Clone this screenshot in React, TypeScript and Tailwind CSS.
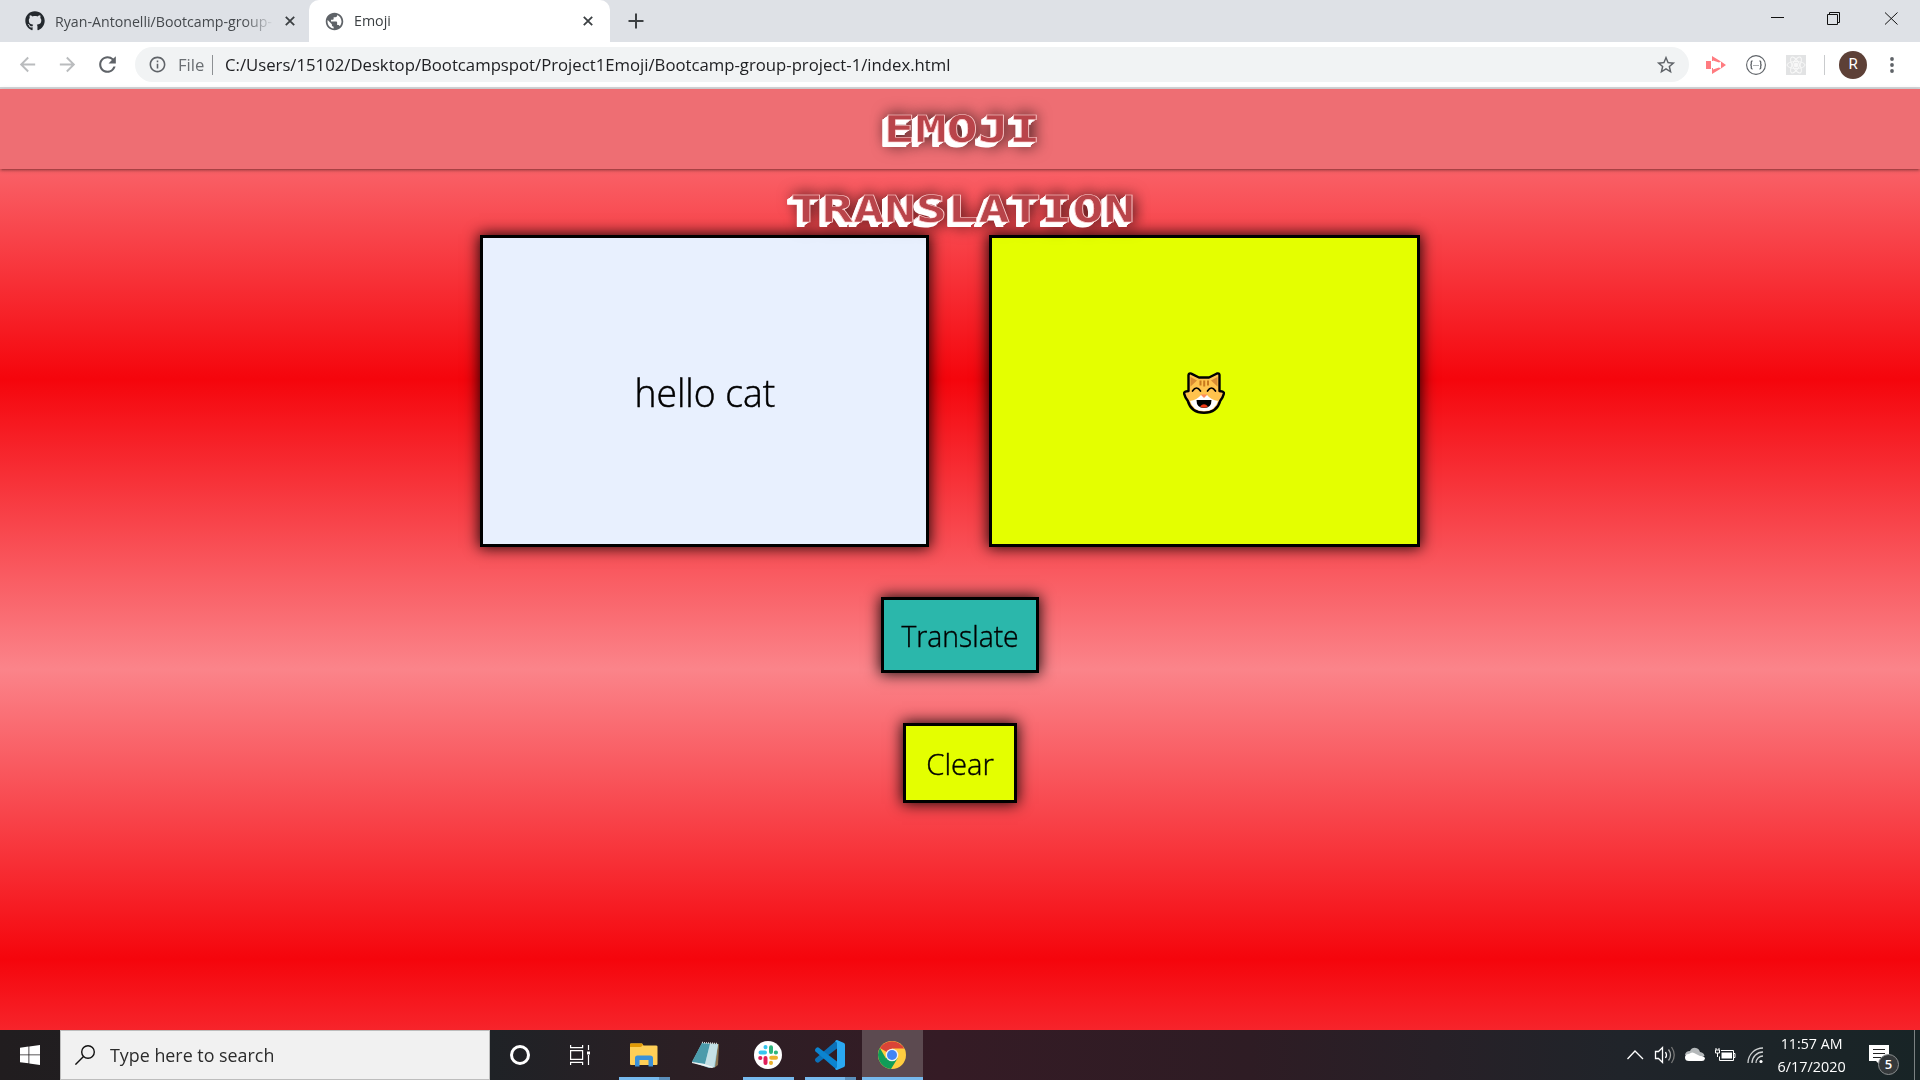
import React from "react";
import { FaGithub } from "react-icons/fa";
import { MdPublic, MdRefresh, MdInfoOutline, MdStarBorder, MdArrowBack, MdArrowForward } from "react-icons/md";

const ui = "font-['Open_Sans','Noto_Sans',sans-serif]";

function Cross({ className = "" }: { className?: string }) {
  return (
    <svg viewBox="0 0 10 10" className={"h-[10px] w-[10px] shrink-0 " + className} stroke="#3c4043" strokeWidth="1.8">
      <path d="M.8.8l8.4 8.4M9.2.8L.8 9.2" />
    </svg>
  );
}

function TabStrip() {
  return (
    <div className="flex h-[42px] w-full items-end bg-[#dee1e6]">
      <div className="flex h-[42px] w-[309px] items-center pl-[25px]">
        <FaGithub className="h-5 w-5 shrink-0 text-[#24292e]" />
        <div className="-mt-px ml-[10px] w-[219px] [mask-image:linear-gradient(to_right,black_86%,transparent)]">
          <span className="inline-block origin-left scale-x-[0.945] whitespace-nowrap text-[15px] text-[#45494d]">
            Ryan-Antonelli/Bootcamp-group-
          </span>
        </div>
        <Cross className="ml-[11px]" />
      </div>
      <div className="flex h-[42px] w-[301px] items-center rounded-t-[10px] bg-white pl-[15px]">
        <MdPublic className="h-[21px] w-[21px] shrink-0 text-[#5f6368]" />
        <span className="-mt-px ml-[9px] w-[229px] whitespace-nowrap text-[15px] text-[#3c4043]">
          <span className="inline-block origin-left scale-x-[0.95]">Emoji</span>
        </span>
        <Cross />
      </div>
      <div className="flex h-[42px] flex-1 items-center pl-[18px]">
        <svg viewBox="0 0 16 16" className="h-4 w-4" stroke="#3c4043" strokeWidth="2"><path d="M8 .5v15M.5 8h15" /></svg>
      </div>
      <svg viewBox="0 0 160 42" className="h-[42px] w-[160px]" fill="none" stroke="#111" strokeWidth="1">
        <path d="M11 17.500h13M67.500 14.500h10v10h-10zM69.500 14v-1.500h10v10h-1.500" />
        <path d="M125 12.500l12.500 12M137.500 12.500l-12.500 12" />
      </svg>
    </div>
  );
}

function Toolbar() {
  return (
    <div className="flex h-[47px] w-full items-center border-b-2 border-[#d5d7d9] bg-white pl-[16px]">
      <MdArrowBack className="h-[23px] w-[23px] text-[#babcbe]" />
      <MdArrowForward className="ml-[17px] h-[23px] w-[23px] text-[#babcbe]" />
      <MdRefresh className="ml-[16px] h-[25px] w-[25px] text-[#5f6368]" />
      <div className="ml-[15px] flex h-[35px] w-[1554px] items-center rounded-full bg-[#f1f3f4] pl-[13px] pr-[12px]">
        <MdInfoOutline className="h-[19px] w-[19px] text-[#5f6368]" />
        <span className="ml-[11px] w-[34px] text-[17px] text-[#6b6f73]"><span className="inline-block origin-left scale-x-[0.98]">File</span></span>
        <div className="h-5 w-px bg-[#8d9093]" />
        <span className="ml-[12px] flex-1 text-[17px] text-[#202124]">
          <span className="inline-block origin-left scale-x-[0.983] whitespace-nowrap">
            C:/Users/15102/Desktop/Bootcampspot/Project1Emoji/Bootcamp-group-project-1/index.html
          </span>
        </span>
        <MdStarBorder className="h-[22px] w-[22px] text-[#5f6368]" />
      </div>
      <svg viewBox="0 0 20 18" className="ml-[17px] h-[18px] w-5" fill="#ff7b80">
        <path d="M0 5h5v8H0zM6 0l9 5.500-2 1-6-2V5H6zM6 18l9-5.500-2-1-6 2V12H6zM15 5.500L20 9l-5 3.500z" />
      </svg>
      <svg viewBox="0 0 20 20" className="ml-5 h-5 w-5" fill="none" stroke="#5f6368">
        <circle cx="10" cy="10" r="9.400" strokeWidth="1.100" />
        <path d="M6.500 6Q5 6 5.300 8q.2 2-1 2 1.200 0 1 2-.3 2 1.200 2M13.500 6q1.500 0 1.200 2-.2 2 1 2-1.200 0-1 2 .3 2-1.200 2" strokeWidth="1.300" />
        <path d="M7.500 10.500h5" strokeDasharray="1 1" />
      </svg>
      <svg viewBox="0 0 20 20" className="ml-5 h-5 w-5" fill="none" stroke="#f8f8f8">
        <path d="M0 0h20v20H0z" fill="#e2e3e4" stroke="none" />
        <circle cx="10" cy="10" r="2" fill="#f8f8f8" />
        <ellipse cx="10" cy="10" rx="9" ry="3.500" />
        <ellipse cx="10" cy="10" rx="9" ry="3.500" transform="rotate(60 10 10)" />
        <ellipse cx="10" cy="10" rx="9" ry="3.500" transform="rotate(120 10 10)" />
      </svg>
      <div className="ml-[18px] h-5 w-px bg-[#c9cbcd]" />
      <div className="ml-[14px] flex h-[28px] w-[28px] items-center justify-center rounded-full bg-[#5d4037] font-[Roboto] text-[15px] text-white">R</div>
      <svg viewBox="0 0 4 16" className="ml-[23px] h-4 w-1" fill="#5f6368">
        <circle cx="2" cy="2" r="1.900" /><circle cx="2" cy="8" r="1.900" /><circle cx="2" cy="14" r="1.900" />
      </svg>
    </div>
  );
}

const titleText =
  "block origin-center scale-x-[1.37] font-['DejaVu_Sans_Mono',monospace] text-[38px] font-bold leading-[80px] whitespace-nowrap text-[#b9444a] [-webkit-text-stroke:0.6px_#ffd0d0] [text-shadow:-1px_1px_#fff,-2px_2px_#fff,-3px_3px_#fff,-4px_4px_#fff,-4px_5px_#fff,0_0_14px_rgba(0,0,0,0.75),0_4px_14px_rgba(0,0,0,0.5)]";

function CatFace() {
  return (
    <svg viewBox="0 0 42 42" className="mr-px mt-[3px] h-[42px] w-[42px]">
      <path d="M5.500 3Q6 .9 8.200 1.600L16 5.500h10l8-4Q36.200.8 36.500 3v16l3.300.7q1.500.8 1 2.200-1 4-3.600 7Q34 40.700 21 40.700T4.800 28.900q-2.600-3-3.600-7-.4-1.400 1-2.200l3.300-.7z" fill="#ffc34d" stroke="#000" strokeWidth="2.400" strokeLinejoin="round" />
      <path d="M7.500 5l6.500 3.500-6.500 6zM34.500 5L28 8.500l6.500 6z" fill="#d98c33" />
      <path d="M16.500 8.500h2v5h-2zM20.200 8.500h2v6h-2zM24 8.500h2v5h-2z" fill="#c97a1d" />
      <path d="M7 29q7-1 11-6h6q4 5 11 6-3 10-14 10T7 29z" fill="#fff" />
      <path d="M17.500 22.500h7L21 26z" fill="#ff8a5c" />
      <path d="M13.500 28h15q0 8-7.500 8t-7.500-8z" fill="#000" />
      <path d="M17 34.500q4-4.500 8 0-4 2.500-8 0z" fill="#f03a17" />
      <path d="M9.500 19q4-6 8 0M24.500 19q4-6 8 0" fill="none" stroke="#000" strokeWidth="1.700" strokeLinecap="round" />
    </svg>
  );
}

const panel = "flex items-center justify-center border-[3px] border-black shadow-[0_0_14px_1px_rgba(0,0,0,0.9)]";

function Page() {
  return (
    <main className="h-[941px] w-full bg-[linear-gradient(to_bottom,#fb848a_0px,#f5050c_290px,#fb848a_580px,#f5050c_870px,#fb848a_1160px)] font-['Open_Sans','Noto_Sans',sans-serif]">
      <nav className="h-20 w-full bg-[#ee6e73] shadow-[0_2px_2px_0_rgba(0,0,0,0.14),0_3px_1px_-2px_rgba(0,0,0,0.12),0_1px_5px_0_rgba(0,0,0,0.2)]">
        <h1 className="relative z-10 flex flex-col items-center pl-[5px]">
          <span className={titleText}>EMOJI</span>
          <span className={titleText}>TRANSLATION</span>
        </h1>
      </nav>
      <section className="mt-[66px] flex gap-[60px] pl-[480px]">
        <div className={panel + " h-[312px] w-[449px] bg-[#e8f0fe] text-[38px] font-light text-black [-webkit-text-stroke:0.5px_#000]"}>
          <span className="inline-block scale-x-[0.98] pt-[2px]">hello cat</span>
        </div>
        <div className={panel + " h-[312px] w-[431px] bg-[#e4ff00]"}><CatFace /></div>
      </section>
      <div className="mt-[50px] flex flex-col items-center gap-[50px] text-[29.500px] font-light text-black [-webkit-text-stroke:0.4px_#000]">
        <button className={panel + " h-[76px] w-[158px] bg-[#2bb7ab]"}><span className="inline-block scale-x-[0.96] pt-[3px]">Translate</span></button>
        <button className={panel + " h-[80px] w-[114px] bg-[#e4ff00]"}><span className="inline-block scale-x-[0.99] pt-[3px]">Clear</span></button>
      </div>
    </main>
  );
}

function Explorer() {
  return (
    <svg viewBox="0 0 28 24" className="h-6 w-7">
      <path d="M0 1.500Q0 .5 1 .5h11l1.500 2H26q1.500 0 1.500 1V21q0 1-1 1H1q-1 0-1-1z" fill="#ffcf57" />
      <path d="M0 1.500Q0 .5 1 .5h11l1 1.500-2 2H0z" fill="#e29a06" />
      <path d="M5 23.500V15q0-2.500 2.500-2.500H20q3 0 3 2.500v8.500h-4.500V17h-9v6.500z" fill="#3b91d9" />
    </svg>
  );
}
function Notepad() {
  return (
    <svg viewBox="0 0 28 28" className="h-7 w-7">
      <path d="M10 2l17 1-1 21-4 3z" fill="#8a7350" />
      <path d="M10 2l16 1-3 23-6 1L0 21z" fill="#8fc6d2" />
      <path d="M10 2l8 1L13 23 0 21z" fill="#4b9bab" />
      <path d="M18 3l8 .5L22 26l-9-3z" fill="#c5e1e6" />
      <path d="M0 21l13 2 9 3-2 1L0 22z" fill="#eef3f3" />
      <path d="M10 1.500l16 1.200" stroke="#ddd" strokeWidth="1.500" strokeDasharray="1 1" />
    </svg>
  );
}
function Slack() {
  return (
    <svg viewBox="0 0 28 28" className="h-7 w-7" strokeWidth="4" strokeLinecap="round">
      <circle cx="14" cy="14" r="14" fill="#fff" />
      <path d="M6.500 11.500H11M11.500 6v.2" stroke="#36c5f0" />
      <path d="M17 6.200V11M22 11.500h-.2" stroke="#2eb67d" />
      <path d="M22 16.800h-4.800M17 22v-.2" stroke="#ecb22e" />
      <path d="M11.500 17v5M6.200 17h.2" stroke="#e01e5a" />
    </svg>
  );
}
function Code() {
  return (
    <svg viewBox="0 0 30 30" className="h-[30px] w-[30px]">
      <path d="M.5 18.500L22 0v8.500L3.500 22.500q-1 .5-2-.3l-1-1q-1-1.300 0-2.700z" fill="#0b70b8" />
      <path d="M.5 11.500q-1-1.400 0-2.700l1-1q1-.8 2-.3L22 21.500V30z" fill="#0b84d0" />
      <path d="M22 0l7 3q1 .5 1 2v20q0 1.500-1 2l-7 3q-1.500 0-2-1.500 2 0 2-2v-23q0-2-2-2 .5-1.500 2-1.500z" fill="#2aa8f2" />
    </svg>
  );
}
function Chrome() {
  return (
    <svg viewBox="0 0 28 28" className="mr-px h-7 w-7">
      <circle cx="14" cy="14" r="14" fill="#ffcd40" />
      <path d="M14 14L1.900 7A14 14 0 0 1 26.100 7.500H14z" fill="#db4437" />
      <path d="M1.900 7A14 14 0 0 0 13 28l6.500-10.500L14 14 8 17.500z" fill="#0f9d58" />
      <circle cx="14" cy="14" r="6.300" fill="#f1f1f1" />
      <circle cx="14" cy="14" r="5" fill="#4285f4" />
    </svg>
  );
}

function Slot({ children, bar = "" }: { children: React.ReactNode; bar?: string }) {
  return (
    <div className={"flex h-[50px] flex-col items-center " + (bar === "active" ? "ml-px w-[61px] bg-[#5c4a50]" : "w-[62px] pl-px")}>
      <div className="flex h-[47px] flex-col justify-center pr-px pt-[3px]">{children}</div>
      {bar && (
        <div className={"flex h-[3px] " + (bar === "active" ? "w-full" : "w-[51px]")}>
          <div className="flex-1 bg-[#76b9ed]" />
          {bar === "multi" && <div className="w-[11px] bg-[#5b8fbb]" />}
        </div>
      )}
    </div>
  );
}

function Taskbar() {
  return (
    <footer className="flex h-[50px] w-full bg-[linear-gradient(to_right,#211d1f_0px,#1f2226_490px,#2b1f24_680px,#351b25_940px,#2e1c24_1250px,#20242a_1620px,#182426_1920px)] font-['Open_Sans','Noto_Sans',sans-serif]">
      <div className="flex w-[60px] items-center justify-center">
        <svg viewBox="0 0 20 20" className="h-5 w-5" fill="#fff"><path d="M0 2.700L8.500 1.500v8H0zM9.300 1.400L20 0v9.500H9.300zM0 10.300h8.500v8L0 17.200zM9.300 10.300H20V20L9.300 18.500z" /></svg>
      </div>
      <div className="flex w-[430px] items-center border border-[#bdbdbd] bg-[#f1f1f1] pl-[14px]">
        <svg viewBox="0 0 20 20" className="h-5 w-5" fill="none" stroke="#111" strokeWidth="1.400"><circle cx="13" cy="7" r="6.300" /><path d="M8.500 11.500L.4 19.600" /></svg>
        <span className="ml-[15px] inline-block origin-left scale-x-[0.94] whitespace-nowrap text-[19px] text-[#2b2b2b]">Type here to search</span>
      </div>
      <div className="flex w-[60px] items-center justify-center"><div className="h-5 w-5 rounded-full border-[3px] border-white" /></div>
      <div className="flex w-[63px] items-center justify-center pr-[3px]">
        <svg viewBox="0 0 20 20" className="h-5 w-5" fill="none" stroke="#fff" strokeWidth="1.200"><path d="M.6 0v2.700h12V0M.6 5.600h12v8.800H.6zM.6 20v-2.700h12V20M18.500 0v5M18.500 10v10" /><path d="M17 6.500h3v3h-3z" fill="#fff" stroke="none" /></svg>
      </div>
      <Slot bar="multi"><Explorer /></Slot>
      <Slot><Notepad /></Slot>
      <Slot bar="single"><Slack /></Slot>
      <Slot bar="multi"><Code /></Slot>
      <Slot bar="active"><Chrome /></Slot>
      <div className="w-[697px]" />
      <svg viewBox="0 0 119 50" className="h-[50px] w-[119px] shrink-0" fill="none" stroke="#fff" strokeWidth="1.300">
        <path d="M7.500 29l7.500-8 8 8" />
        <path d="M35.500 21.500h3l4-4v15l-4-4h-3z" />
        <path d="M45.500 22q2 3 0 6" /><path d="M48.500 19.500q4 5.500 0 11" stroke="#aaa" /><path d="M51.500 17q5.500 8 0 16" stroke="#777" />
        <path d="M65 25q.5-4 5-4 2-4 6-3 3 .5 4 4 4 .5 4.500 4L75 27z" fill="#b4b8ba" stroke="none" />
        <path d="M69 31q-4 0-4-3.500T69 24q3-3 7 0l4 2q4.500-.5 5 2.500-.5 2.500-3 2.500z" fill="#fff" stroke="none" />
        <path d="M101 20.500h12.500v10H99.500v-4M113.500 23.500h1.500v4h-1.500" strokeWidth="1" /><path d="M101.500 22.500h10.500v6h-10.500z" fill="#fff" stroke="none" />
        <path d="M95.500 20h4v3h-4zM96 18v2M99 18v2M97.500 23v4" strokeWidth="1" />
      </svg>
      <svg viewBox="0 0 24 50" className="h-[50px] w-6 shrink-0" fill="none" stroke="#cfd2d3" strokeWidth="1.300">
        <path d="M9 33A15 15 0 0 1 24 18M13 33a11 11 0 0 1 11-11M17 33a7 7 0 0 1 7-7" /><circle cx="22" cy="31.500" r="1.600" fill="#fff" stroke="none" />
      </svg>
      <div className="ml-[2px] flex w-[94px] shrink-0 flex-col items-center pt-[2px] text-[15px] leading-[23px] text-white">
        <span className="inline-block scale-x-[0.95] whitespace-nowrap">11:57 AM</span>
        <span className="inline-block scale-x-[0.96] whitespace-nowrap">6/17/2020</span>
      </div>
      <div className="relative ml-[10px] w-[45px] shrink-0 pt-[15px]">
        <svg viewBox="0 0 20 20" className="h-5 w-5"><path d="M0 0h20v16H11v4l-4-4H0z" fill="#fff" /><path d="M4 4.500h12M4 8.500h12M4 12.500h8" stroke="#222" strokeWidth="1.100" /></svg>
        <div className="absolute left-[9px] top-[24px] flex h-[21px] w-[21px] items-center justify-center rounded-full border border-[#8b8f90] bg-[#35393b] text-[13px] font-semibold text-white">5</div>
      </div>
      <div className="flex-1 border-l border-[#7b8283]" />
    </footer>
  );
}

export default function App() {
  return (
    <div className={"flex h-[1080px] w-[1920px] flex-col overflow-hidden " + ui}>
      <TabStrip />
      <Toolbar />
      <Page />
      <Taskbar />
    </div>
  );
}
